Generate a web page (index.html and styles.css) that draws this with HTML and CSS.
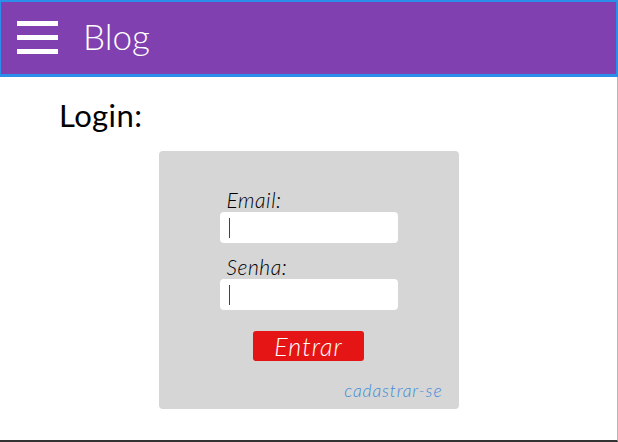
FILE: index.html
```html
<!DOCTYPE html>
<html lang="pt">
<head>
<meta charset="utf-8">
<title>Blog - Login</title>
<link rel="stylesheet" href="styles.css">
</head>
<body>
<div class="frame">
  <header class="topbar">
    <div class="burger"><span></span><span></span><span></span></div>
    <div class="brand">Blog</div>
  </header>
  <main class="content">
    <h1 class="title">Login:</h1>
    <form class="card">
      <div class="fields">
        <label class="label">Email:</label>
        <div class="input"><span class="caret"></span></div>
        <label class="label">Senha:</label>
        <div class="input"><span class="caret"></span></div>
      </div>
      <div class="actions"><button type="button" class="btn">Entrar</button></div>
      <div class="signup"><a href="#" class="link">cadastrar-se</a></div>
    </form>
  </main>
</div>
</body>
</html>
```
FILE: styles.css
```css
* { box-sizing: border-box; }
html, body { margin: 0; padding: 0; background: #fff; }
body { font-family: "Lato", "Open Sans", sans-serif; font-weight: 300; color: #111; }
.frame {
  width: 618px;
  height: 442px;
  border-right: 1px solid #b5b5b5;
  border-bottom: 2px solid #333;
  display: flex;
  flex-direction: column;
}
.topbar {
  height: 77px;
  background: #8040b0;
  border: 2px solid #2b8ee8;
  border-bottom-width: 3px;
  border-left-width: 1px;
  display: flex;
  align-items: center;
  padding-left: 16px;
  margin-right: -1px;
}
.burger { width: 41px; display: flex; flex-direction: column; gap: 9px; margin-top: -2px; }
.burger span { display: block; height: 5px; background: #fff; }
.brand { color: #fff; font-size: 35px; font-weight: 300; margin-left: 25px; margin-top: -5px; }
.content { flex: 1; padding-top: 18px; }
.title { margin: 0 0 16px 59px; font-size: 31px; font-weight: 400; line-height: 40px; letter-spacing: 0.4px; color: #000; }
.card {
  width: 300px;
  height: 258px;
  margin: 0 auto;
  background: #d6d6d6;
  border-radius: 4px;
  padding-top: 37px;
  display: flex;
  flex-direction: column;
}
.fields { width: 178px; margin: 0 auto; display: flex; flex-direction: column; }
.label { font-style: italic; font-size: 21px; line-height: 24px; padding-left: 7px; color: #000; letter-spacing: 0.6px; }
.input { height: 31px; background: #fff; border-radius: 4px; margin-bottom: 12px; padding: 6px 0 0 9px; }
.input:last-child { margin-bottom: 0; }
.caret { display: block; width: 1px; height: 20px; background: #444; }
.actions { display: flex; justify-content: center; margin-top: 21px; }
.btn {
  width: 111px; height: 30px; border: none; border-radius: 3px;
  background: #e61515; color: #fff;
  font-family: inherit; font-style: italic; font-weight: 300; font-size: 25px; line-height: 30px; padding: 0;
  letter-spacing: 1px;
}
.signup { text-align: right; padding-right: 16px; margin-top: 19px; }
.link { color: #3f8ad6; font-style: italic; font-size: 17.5px; text-decoration: none; letter-spacing: 0.9px; }
```
